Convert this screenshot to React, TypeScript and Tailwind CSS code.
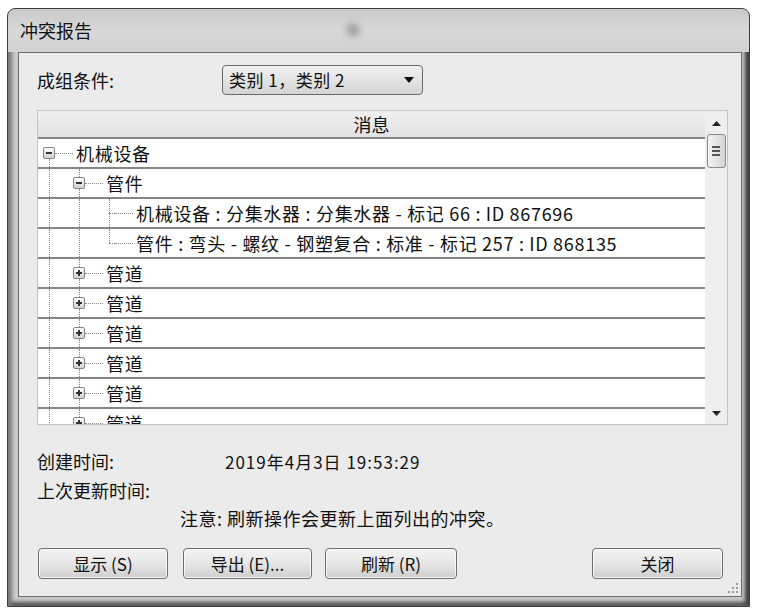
import React from 'react';

type Node = {
  guides: number;
  kind: 'open' | 'closed' | 'leaf';
  up: boolean;
  down: boolean;
  text: string;
};

const rows: Node[] = [
  { guides: 0, kind: 'open', up: false, down: true, text: '机械设备' },
  { guides: 1, kind: 'open', up: true, down: true, text: '管件' },
  { guides: 2, kind: 'leaf', up: true, down: true, text: '机械设备 : 分集水器 : 分集水器 - 标记 66 : ID 867696' },
  { guides: 2, kind: 'leaf', up: true, down: false, text: '管件 : 弯头 - 螺纹 - 钢塑复合 : 标准 - 标记 257 : ID 868135' },
  { guides: 1, kind: 'closed', up: true, down: true, text: '管道' },
  { guides: 1, kind: 'closed', up: true, down: true, text: '管道' },
  { guides: 1, kind: 'closed', up: true, down: true, text: '管道' },
  { guides: 1, kind: 'closed', up: true, down: true, text: '管道' },
  { guides: 1, kind: 'closed', up: true, down: true, text: '管道' },
  { guides: 1, kind: 'closed', up: true, down: true, text: '管道' },
];

const ToggleBox = ({ open }: { open: boolean }) => (
  <span className="relative ml-[5px] flex h-[12px] w-[12px] shrink-0 items-center justify-center rounded-[2px] border border-[#858585] bg-gradient-to-b from-white to-[#d2d2d2]">
    <span className="absolute h-[2px] w-[6px] bg-[#333]" />
    {!open && <span className="absolute h-[6px] w-[2px] bg-[#333]" />}
  </span>
);

const TreeRow = ({ row }: { row: Node }) => (
  <div className="flex h-[30px] shrink-0 items-center border-b-2 border-[#858585]">
    {Array.from({ length: row.guides }).map((_, i) => (
      <div key={i} className="h-full w-[30px] shrink-0">
        <div className="ml-[11px] h-full border-l border-dotted border-[#8a8a8a]" />
      </div>
    ))}
    <div className="flex h-full w-[38px] shrink-0 items-center">
      <div className="flex h-full w-[17px] shrink-0 flex-col">
        <div className={`ml-[11px] flex-1 border-l border-dotted ${row.up ? 'border-[#8a8a8a]' : 'border-transparent'}`} />
        {row.kind === 'leaf' ? (
          <div className="ml-[11px] h-0 w-[6px] border-t border-dotted border-[#8a8a8a]" />
        ) : (
          <ToggleBox open={row.kind === 'open'} />
        )}
        <div className={`ml-[11px] flex-1 border-l border-dotted ${row.down ? 'border-[#8a8a8a]' : 'border-transparent'}`} />
      </div>
      <div className="mr-[3px] h-0 flex-1 border-t border-dotted border-[#8a8a8a]" />
    </div>
    <span className="whitespace-nowrap text-[18px] leading-none tracking-[0.7px] text-[#111]">{row.text}</span>
  </div>
);

const Button = ({ label, w }: { label: string; w: string }) => (
  <button
    className={`${w} flex h-[31px] shrink-0 items-center justify-center rounded-[4px] border border-[#6e6e6e] bg-gradient-to-b from-[#f4f4f4] via-[#e6e6e6] to-[#cfcfcf] text-[17px] text-[#111] shadow-[inset_0_0_0_1px_#f8f8f8]`}
  >
    {label}
  </button>
);

export default function App() {
  return (
    <div className="min-h-screen bg-white pl-[7px] pt-[8px] font-['Noto_Sans_CJK_SC','Noto_Sans',sans-serif]">
      <div className="relative flex h-[599px] w-[743px] flex-col overflow-hidden rounded-t-[8px] border border-[#3e3e3e] bg-[#cdcdcd] shadow-[inset_4px_0_4px_#7a7a7a,inset_-4px_0_4px_#3c3c3c,inset_0_-4px_4px_#555]">
        {/* Title bar */}
        <div className="relative flex h-[43px] shrink-0 items-center bg-gradient-to-b from-[#c9c9c9] via-[#d8d8d8] to-[#d2d2d2] pl-[12px]">
          <span className="text-[18px] text-[#111]">冲突报告</span>
          <div className="absolute left-[338px] top-[14px] h-[14px] w-[14px] rounded-full bg-[#a4a4a4] blur-[3px]" />
        </div>

        {/* Client area */}
        <div className="relative ml-[10px] flex h-[545px] w-[724px] flex-col border border-[#6c6c6c] bg-[#ebebeb] px-[18px] pt-[12px]">
          <div className="flex h-[30px] items-center">
            <span className="w-[185px] text-[18px] text-[#111]">成组条件:</span>
            <div className="flex h-[30px] w-[201px] items-center justify-between rounded-[4px] border border-[#6a6a6a] bg-gradient-to-b from-[#f2f2f2] to-[#d4d4d4] pl-[6px] pr-[8px]">
              <span className="text-[17px] tracking-[0.5px] text-[#111]">类别 1，类别 2</span>
              <svg width="10" height="6" viewBox="0 0 10 6">
                <path d="M0 0 H10 L5 6 Z" fill="#111" />
              </svg>
            </div>
          </div>

          {/* List */}
          <div className="mt-[15px] flex h-[315px] w-[691px] border border-[#c4c4c4] bg-white">
            <div className="flex w-[667px] flex-col overflow-hidden">
              <div className="flex h-[28px] shrink-0 items-center justify-center border-b-2 border-[#858585] bg-gradient-to-b from-[#f0f0f0] to-[#e2e2e2] text-[18px] text-[#111]">
                消息
              </div>
              {rows.map((r, i) => (
                <TreeRow key={i} row={r} />
              ))}
            </div>
            <div className="flex w-[22px] flex-col items-center bg-[#eeeeee] pt-[10px]">
              <svg width="9" height="5" viewBox="0 0 9 5">
                <path d="M4.5 0 L9 5 H0 Z" fill="#222" />
              </svg>
              <div className="mt-[8px] flex h-[34px] w-[19px] flex-col items-center justify-center gap-[2px] rounded-[3px] border border-[#8a8a8a] bg-gradient-to-r from-[#f4f4f4] to-[#d4d4d4]">
                <span className="h-[2px] w-[8px] bg-[#555]" />
                <span className="h-[2px] w-[8px] bg-[#555]" />
                <span className="h-[2px] w-[8px] bg-[#555]" />
              </div>
              <div className="flex-1" />
              <svg width="9" height="5" viewBox="0 0 9 5" className="mb-[8px]">
                <path d="M0 0 H9 L4.5 5 Z" fill="#222" />
              </svg>
            </div>
          </div>

          {/* Info */}
          <div className="mt-[22px] flex h-[29px] items-center text-[18px] text-[#111]">
            <span className="w-[188px]">创建时间:</span>
            <span className="text-[17px] tracking-[1px]">2019年4月3日 19:53:29</span>
          </div>
          <div className="flex h-[29px] items-center text-[18px] text-[#111]">
            <span>上次更新时间:</span>
          </div>
          <div className="flex h-[26px] items-center pl-[143px] text-[18px] tracking-[0.5px] text-[#111]">
            注意: 刷新操作会更新上面列出的冲突。
          </div>

          {/* Buttons */}
          <div className="mt-[17px] flex items-center pl-[1px]">
            <Button label="显示 (S)" w="w-[130px]" />
            <div className="w-[15px]" />
            <Button label="导出 (E)..." w="w-[129px]" />
            <div className="w-[13px]" />
            <Button label="刷新 (R)" w="w-[132px]" />
            <div className="flex-1" />
            <Button label="关闭" w="w-[131px]" />
          </div>

          <svg width="10" height="10" viewBox="0 0 10 10" className="absolute bottom-[3px] right-[3px]">
            <g fill="#9a9a9a">
              <rect x="8" y="0" width="2" height="2" />
              <rect x="4" y="4" width="2" height="2" />
              <rect x="8" y="4" width="2" height="2" />
              <rect x="0" y="8" width="2" height="2" />
              <rect x="4" y="8" width="2" height="2" />
              <rect x="8" y="8" width="2" height="2" />
            </g>
          </svg>
        </div>
      </div>
    </div>
  );
}
